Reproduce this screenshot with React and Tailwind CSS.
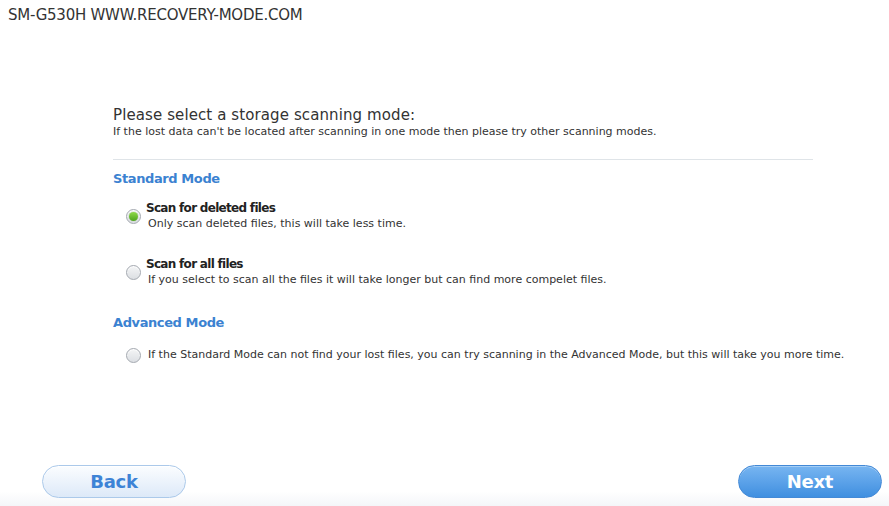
import React from 'react';

function Radio({ checked }) {
  return (
    <span className="relative mt-[1px] inline-flex h-[15px] w-[15px] shrink-0 items-center justify-center rounded-full border border-[#a4a9b0] bg-gradient-to-b from-[#f4f5f6] to-[#dcdfe3] shadow-[inset_0_1px_1px_rgba(255,255,255,0.9)]">
      {checked && (
        <span className="h-[9px] w-[9px] rounded-full bg-gradient-to-b from-[#8fd94a] to-[#4da41c] shadow-[0_0_1px_rgba(40,100,10,0.6)]" />
      )}
    </span>
  );
}

function Option({ checked, title, desc }) {
  return (
    <div className="flex items-center gap-[5px] pl-[13px]">
      <Radio checked={checked} />
      <div className="flex flex-col">
        <span className="text-[12px] font-bold leading-[16px] tracking-[-0.7px] text-[#222]">{title}</span>
        <span className="pl-[2px] text-[11px] leading-[16px] text-[#333]">{desc}</span>
      </div>
    </div>
  );
}

export default function App() {
  return (
    <div className="flex h-[506px] w-[889px] flex-col overflow-hidden bg-white font-['DejaVu_Sans',sans-serif] text-[#333]">
      {/* title bar */}
      <div className="px-[8px] pt-[6px] text-[15px] leading-[18px] tracking-[-0.25px] text-[#333]">
        SM-G530H WWW.RECOVERY-MODE.COM
      </div>

      <div className="flex-1 pl-[113px] pt-[82px]">
        <div className="w-[700px]">
          <div className="text-[15px] leading-[18px] tracking-[0.1px] text-[#333]">
            Please select a storage scanning mode:
          </div>
          <div className="text-[11px] leading-[15px] text-[#333]">
            If the lost data can't be located after scanning in one mode then please try other scanning modes.
          </div>
          <div className="mt-[20px] h-px bg-[#dfe4e8]" />

          <div className="mt-[11px] text-[13px] font-bold leading-[16px] tracking-[-0.4px] text-[#3b82d1]">
            Standard Mode
          </div>

          <div className="mt-[13px] flex flex-col gap-[24px]">
            <Option
              checked
              title="Scan for deleted files"
              desc="Only scan deleted files, this will take less time."
            />
            <Option
              title="Scan for all files"
              desc="If you select to scan all the files it will take longer but can find more compelet files."
            />
          </div>

          <div className="mt-[27px] text-[13px] font-bold leading-[16px] tracking-[-0.4px] text-[#3b82d1]">
            Advanced Mode
          </div>

          <div className="mt-[16px] flex items-center gap-[7px] pl-[13px]">
            <Radio />
            <span className="whitespace-nowrap text-[11px] leading-[16px] text-[#333]">
              If the Standard Mode can not find your lost files, you can try scanning in the Advanced Mode, but this will take you more time.
            </span>
          </div>
        </div>
      </div>

      {/* footer */}
      <div className="flex h-[49px] items-start justify-between bg-gradient-to-b from-white from-70% to-[#f4f6f9] px-[42px] pt-[8px]">
        <button className="flex h-[33px] w-[144px] items-center justify-center rounded-full border border-[#abc9ea] bg-gradient-to-b from-[#fbfdff] to-[#dde9f8] text-[18px] font-bold tracking-[-0.3px] text-[#3d83d6] shadow-[inset_0_1px_0_#fff]">
          Back
        </button>
        <button className="mr-[-35px] flex h-[33px] w-[144px] items-center justify-center rounded-full border border-[#4389d6] bg-gradient-to-b from-[#77b5f1] to-[#3f8fe0] text-[18px] font-bold tracking-[-0.3px] text-white shadow-[inset_0_1px_0_rgba(255,255,255,0.35)]">
          Next
        </button>
      </div>
    </div>
  );
}
